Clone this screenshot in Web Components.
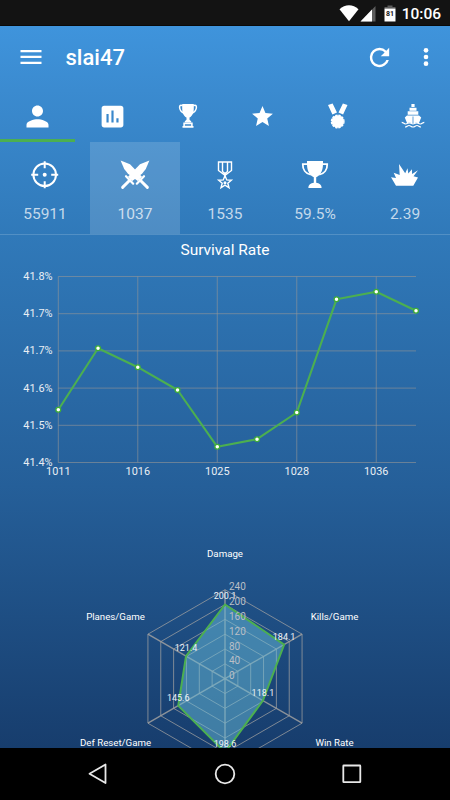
<!DOCTYPE html>
<html lang="en">
<head>
<meta charset="utf-8">
<title>slai47</title>
<style>
  html, body { height: 100%; }
  body {
    margin: 0;
    overflow: hidden;
    font-family: Roboto, sans-serif;
    color: #fff;
    background: #000;
  }
</style>
</head>
<body>
<player-screen>
  <status-bar slot="status" time="10:06" battery="81"></status-bar>
  <app-bar slot="header">slai47</app-bar>

  <tab-bar slot="tabs">
    <tab-item icon="person" active></tab-item>
    <tab-item icon="assessment"></tab-item>
    <tab-item icon="trophy"></tab-item>
    <tab-item icon="star"></tab-item>
    <tab-item icon="medal"></tab-item>
    <tab-item icon="ship"></tab-item>
  </tab-bar>

  <stat-row>
    <stat-tile icon="crosshair">55911</stat-tile>
    <stat-tile icon="swords" selected>1037</stat-tile>
    <stat-tile icon="ribbon">1535</stat-tile>
    <stat-tile icon="cup">59.5%</stat-tile>
    <stat-tile icon="blast">2.39</stat-tile>
  </stat-row>
  <line-chart>Survival Rate</line-chart>
  <radar-chart></radar-chart>

  <nav-bar slot="nav"></nav-bar>
</player-screen>

<script>
const ICONS = {
  menu: { size: [28, 28], box: '0 0 24 24', art: '<path d="M3 18h18v-1.9H3zM3 12.9h18V11H3zM3 6v1.9h18V6z"/>' },
  refresh: { size: [29, 29], box: '0 0 24 24', art: '<path d="M17.65 6.35A7.96 7.96 0 0 0 12 4a8 8 0 1 0 7.73 10h-2.08A6 6 0 1 1 12 6c1.66 0 3.14.69 4.22 1.78L13 11h7V4z"/>' },
  more: { size: [28, 28], box: '0 0 24 24', art: '<circle cx="12" cy="6.3" r="2"/><circle cx="12" cy="12" r="2"/><circle cx="12" cy="17.7" r="2"/>' },
  person: { size: [33, 33], box: '0 0 24 24', art: '<path d="M12 12c2.21 0 4-1.79 4-4s-1.79-4-4-4-4 1.79-4 4 1.79 4 4 4zm0 2c-2.67 0-8 1.34-8 4v2h16v-2c0-2.66-5.33-4-8-4z"/>' },
  // bars are shorter and sit lower to the right
  assessment: { size: [29, 29], box: '0 0 24 24', art: '<path d="M19 3H5c-1.1 0-2 .9-2 2v14c0 1.1.9 2 2 2h14c1.1 0 2-.9 2-2V5c0-1.1-.9-2-2-2zM8.800 17H7v-7h1.800v7zm4.100 0h-1.800V7h1.800v10zm4.100 0h-1.800v-3.500H17V17z"/>' },
  trophy: {
    size: [20, 26], box: '0 0 20 26',
    art: `<path d="M4.200 1h11.600v4c0 4.500-1.300 8.200-4.300 9.500v2.300l1.700 1.500v1.200H6.800v-1.200l1.700-1.500v-2.300C5.500 13.200 4.200 9.500 4.200 5z"/>
      <path d="M4.700 2.700C2.500 1.900 1.500 2.500 1.600 4.300c.1 2.300 1.600 4.700 4.400 5.900M15.300 2.700c2.200-.8 3.200-.2 3.100 1.600-.1 2.300-1.600 4.700-4.400 5.900" fill="none" stroke="#fff" stroke-width="1.500"/>
      <path d="M5.300 19.500h9.400V23h.8v1.800h-11V23h.8zm1.600 1.700v1.500h6.200v-1.500z" fill-rule="evenodd"/>`
  },
  star: { size: [25, 25], box: '0 0 24 24', art: '<path d="M12 17.270 18.180 21l-1.640-7.030L22 9.240l-7.190-.61L12 2 9.190 8.630 2 9.240l5.460 4.730L5.820 21z"/>' },
  medal: {
    size: [22, 28], box: '0 0 22 28',
    art: `<path d="M1 3 5.600 1.500 10 10.600l-4.600 2zM20.500 3l-4.600-1.500-4.400 9.100 4.600 2z"/>
      <circle cx="10.700" cy="19.500" r="6.200"/><circle cx="10.700" cy="19.500" r="6.300" fill="none" stroke="#fff" stroke-width="1.300" stroke-dasharray="2.300 1"/>`
  },
  ship: {
    size: [24, 26], box: '0 0 24 26',
    art: `<path d="M10.400 1h3.200v3h-3.200zM8.500 4.800h7v2.900h-7zM6.700 8.300h10.600v3.500H6.700z"/>
      <path d="M3.800 14.400 6 12.600h12l2.200 1.800-2.300 5.800c-1 0-1.700-.8-2.600-.8s-1.800 1-2.900 1V13.500h-.8v6.900c-1.100 0-2-.9-2.900-.9s-1.600.7-2.600.7z"/>
      <path d="M.7 19.300c1.500 0 2 1.700 3.800 1.700s2.500-1.200 3.800-1.200 2 1.200 3.700 1.200 2.500-1.200 3.700-1.200S17.700 21 19.500 21s2.300-1.700 3.800-1.700M4 24c1.700 0 2.500-1.500 4-1.500S10.300 24 12 24s2.500-1.500 4-1.500S18.300 24 20 24" fill="none" stroke="#fff" stroke-width="1.200"/>`
  },
  crosshair: {
    size: [30, 30], box: '0 0 30 30',
    art: `<g fill="none" stroke="#fff" stroke-width="2"><circle cx="14.700" cy="14.700" r="11.300"/>
      <path d="M14.700 1.200v7M14.700 21.200v7M1.200 14.700h7M21.200 14.700h7"/></g><circle cx="14.700" cy="14.700" r="2"/>`
  },
  swords: {
    size: [30, 30], box: '0 0 30 30',
    art: `<path d="M.6.600 10 4.300l12 12.400-4.300 4.300L8 13.700 4.200 9z"/>
      <path d="M29.400.6 20 4.300 8 16.700l4.300 4.300L22 13.700 25.800 9z"/>
      <g fill="none" stroke="#fff" stroke-linecap="round">
        <path stroke-width="2.200" d="m16.800 23.700 7.200-7.500M13.200 23.700 6 16.200"/>
        <path stroke-width="2.900" d="m20 20 7.400 7.400M10 20l-7.400 7.400"/>
      </g>`
  },
  ribbon: {
    size: [18, 30], box: '0 0 18 30',
    art: `<g fill="none" stroke="#fff" stroke-width="1.400"><path d="M2.500 2h13v8.500L9 15.300 2.500 10.500zM6.500 2v9.500L9 13.500l2.500-2V2"/>
      <path d="m9 15.500 1.700 4.400 4.700.3-3.600 3 1.200 4.600-4-2.600-4 2.600 1.200-4.600-3.600-3 4.700-.3z"/><circle cx="9" cy="22.700" r=".8"/></g>`
  },
  cup: {
    size: [28, 30], box: '0 0 28 30',
    art: `<path d="M6 1h16v2.500c0 6-1.500 10.500-5.500 12.900l-1.300.8v5.600c3 .4 5.400 2 5.400 5.200H7.400c0-3.200 2.400-4.800 5.400-5.200v-5.600l-1.300-.8C7.500 14 6 9.500 6 3.500z"/>
      <path d="M6.500 4.200H1.800c-.2 5 2.700 9.300 8 10.500M21.500 4.200h4.700c.2 5-2.700 9.300-8 10.500" fill="none" stroke="#fff" stroke-width="1.800"/>`
  },
  blast: {
    size: [28, 30], box: '0 0 28 30',
    art: '<path d="M5 25.700 0 17.300l5 .7-2.300-5.200 6 2.200L8 4l6.200 9.300 2.300-5 .8 5.300 3.600-4.300.2 4.700 5.900-3.700-4.500 6 4.500 1.200-4.700 8.200z"/>'
  }
};

function attachTemplate(el, html) {
  const tpl = document.createElement('template');
  tpl.innerHTML = html;
  el.attachShadow({ mode: 'open' }).appendChild(tpl.content.cloneNode(true));
}

class AppIcon extends HTMLElement {
  connectedCallback() {
    if (this.shadowRoot) return;
    const { size, box, art } = ICONS[this.getAttribute('name')];
    attachTemplate(this, `
      <style>
        :host { display: inline-flex; flex: none; }
        svg { display: block; fill: #fff; }
      </style>
      <svg width="${size[0]}" height="${size[1]}" viewBox="${box}">${art}</svg>
    `);
  }
}

class PlayerScreen extends HTMLElement {
  constructor() {
    super();
    attachTemplate(this, `
      <style>
        :host {
          display: flex;
          flex-direction: column;
          height: 100vh;
        }
        .page {
          flex: 1;
          min-height: 0;
          overflow: hidden;
          background: linear-gradient(#3f94dc 0, #3b8bd0 64px, #3079b9 210px, #255f99 460px, #173d6d 722px);
        }
      </style>
      <slot name="status"></slot>
      <div class="page">
        <slot name="header"></slot>
        <slot name="tabs"></slot>
        <slot></slot>
      </div>
      <slot name="nav"></slot>
    `);
  }
}

class StatusBar extends HTMLElement {
  connectedCallback() {
    if (this.shadowRoot) return;
    attachTemplate(this, `
      <style>
        :host {
          display: flex;
          align-items: center;
          justify-content: flex-end;
          height: 26px;
          box-sizing: border-box;
          padding-right: 9px;
          background: #131313;
          border-bottom: 1px solid #0a0a0a;
          font-size: 15.500px;
          font-weight: 500;
        }
        svg { display: block; margin-right: 6px; }
        span { line-height: 26px; padding-top: 2px; }
      </style>
      <svg width="57" height="18" viewBox="0 0 57 18" fill="#fff">
        <path d="M.5 5.200C6-.1 14-.1 19.500 5.200L10 17.200z"/>
        <path d="M36.500 2v15.500H21.500z" fill="#5c5c5c"/>
        <path d="M33 5.600v11.900H21.500z"/>
        <path d="M45.500 4.500V3h3V1.500h5V3h3v1.500z" fill="#5c5c5c"/>
        <path d="M45.500 4.500h11v13h-11z"/>
        <text x="51" y="12.300" font-size="7" font-weight="700" text-anchor="middle" fill="#131313">${this.getAttribute('battery')}</text>
      </svg>
      <span>${this.getAttribute('time')}</span>
    `);
  }
}

class AppBar extends HTMLElement {
  constructor() {
    super();
    attachTemplate(this, `
      <style>
        :host {
          display: flex;
          align-items: center;
          height: 62px;
          padding: 0 10px 2px 16.5px;
        }
        .title {
          flex: 1;
          margin-left: 21px;
          font-size: 22px;
          font-weight: 500;
        }
        .more { margin-left: 18px; }
      </style>
      <app-icon name="menu"></app-icon>
      <div class="title"><slot></slot></div>
      <app-icon name="refresh"></app-icon>
      <app-icon class="more" name="more"></app-icon>
    `);
  }
}

class TabBar extends HTMLElement {
  constructor() {
    super();
    attachTemplate(this, `
      <style>
        :host {
          display: grid;
          grid-template-columns: repeat(6, 1fr);
          height: 52px;
        }
      </style>
      <slot></slot>
    `);
  }
}

class TabItem extends HTMLElement {
  connectedCallback() {
    if (this.shadowRoot) return;
    attachTemplate(this, `
      <style>
        :host {
          display: flex;
          align-items: center;
          justify-content: center;
          border-bottom: 3px solid transparent;
          padding-top: 3px;
          box-sizing: border-box;
          height: 52px;
        }
        :host([active]) { border-color: #4caf50; }
      </style>
      <app-icon name="${this.getAttribute('icon')}"></app-icon>
    `);
  }
}

class StatRow extends HTMLElement {
  constructor() {
    super();
    attachTemplate(this, `
      <style>
        :host {
          display: grid;
          grid-template-columns: repeat(5, 1fr);
          border-bottom: 1px solid rgba(255, 255, 255, .17);
        }
      </style>
      <slot></slot>
    `);
  }
}

class StatTile extends HTMLElement {
  connectedCallback() {
    if (this.shadowRoot) return;
    attachTemplate(this, `
      <style>
        :host {
          display: flex;
          flex-direction: column;
          align-items: center;
          box-sizing: border-box;
          height: 92px;
          padding-top: 18px;
        }
        :host([selected]) { background: rgba(255, 255, 255, .15); }
        .value {
          margin-top: 14px;
          font-size: 15.500px;
          line-height: 20px;
          color: rgba(255, 255, 255, .72);
        }
      </style>
      <app-icon name="${this.getAttribute('icon')}"></app-icon>
      <div class="value"><slot></slot></div>
    `);
  }
}

class LineChart extends HTMLElement {
  constructor() {
    super();
    const left = 58.3, right = 416, top = 9.500, rowGap = 37.200;
    const step = (right - left) / 9;
    const yLabels = ['41.8%', '41.7%', '41.7%', '41.6%', '41.5%', '41.4%'];
    const xLabels = ['1011', '1016', '1025', '1028', '1036'];
    const values = [142.7, 81.2, 100.2, 123, 179.800, 172.2, 145.5, 32.3, 24.8, 43.8];
    const points = values.map((y, i) => [left + i * step, y]);

    const rows = yLabels.map((t, i) => {
      const y = top + i * rowGap;
      return `<path class="grid" d="M${left} ${y}H${right}"/><text x="52.500" y="${y + 3.500}" text-anchor="end">${t}</text>`;
    }).join('');
    const cols = xLabels.map((t, i) => {
      const x = left + i * 2 * step;
      return `<path class="grid" d="M${x} ${top}V${top + 5 * rowGap}"/><text x="${x}" y="208" text-anchor="middle">${t}</text>`;
    }).join('');
    const dots = points.map(([x, y]) => `<circle cx="${x}" cy="${y}" r="2.400"/>`).join('');

    attachTemplate(this, `
      <style>
        :host { display: block; }
        .title {
          height: 32px;
          line-height: 31px;
          font-size: 15.500px;
          text-align: center;
        }
        svg { display: block; }
        text { fill: #e9eef4; font-size: 10.900px; }
        .grid { stroke: rgba(150, 150, 150, .6); stroke-width: 1; }
        .line { fill: none; stroke: #4caf50; stroke-width: 2.100; stroke-linejoin: round; }
        circle { fill: #fff; stroke: #3fae35; stroke-width: 1.300; }
      </style>
      <div class="title"><slot></slot></div>
      <svg width="450" height="253" viewBox="0 0 450 253">
        ${rows}${cols}
        <polyline class="line" points="${points.join(' ')}"/>
        ${dots}
      </svg>
    `);
  }
}

class RadarChart extends HTMLElement {
  constructor() {
    super();
    const cx = 225, cy = 158.700, unit = 89 / 240;
    // axes run clockwise from the top
    const at = (axis, value) => {
      const a = axis * Math.PI / 3;
      return [cx + Math.sin(a) * value * unit, cy - Math.cos(a) * value * unit];
    };
    const ring = v => [0, 1, 2, 3, 4, 5].map(i => at(i, v)).join(' ');
    const values = [200.1, 184.1, 118.1, 198.6, 145.6, 121.4];

    const rings = [40, 80, 120, 160, 200, 240].map(v => `<polygon class="web" points="${ring(v)}"/>`).join('');
    const spokes = values.map((v, i) => `<path class="spoke" d="M${cx} ${cy}L${at(i, 240)}"/>`).join('');
    const scale = [0, 40, 80, 120, 160, 200, 240].map(v =>
      `<text class="scale" x="229" y="${cy - v * unit + .500}">${v}</text>`).join('');
    const valueLabels = values.map((v, i) => {
      const [x, y] = at(i, v);
      return `<text class="value" x="${x}" y="${y - 5}">${v}</text>`;
    }).join('');
    const names = [
      ['Damage', 225, 37], ['Kills/Game', 334.5, 99.500], ['Win Rate', 334.5, 225.500],
      ['Def Reset/Game', 115.5, 226], ['Planes/Game', 115.5, 99.500]
    ].map(([t, x, y]) => `<text class="name" x="${x}" y="${y}">${t}</text>`).join('');

    attachTemplate(this, `
      <style>
        :host { display: block; }
        svg { display: block; }
        .web { fill: none; stroke: rgba(160, 160, 160, .75); stroke-width: 1; }
        .spoke { stroke: rgba(160, 160, 160, .85); stroke-width: 1.400; }
        .area { fill: rgba(104, 188, 218, .5); stroke: #4caf50; stroke-width: 2; }
        .name { fill: #fff; font-size: 9.700px; text-anchor: middle; }
        .value { fill: #eef2f6; font-size: 9px; text-anchor: middle; }
        .scale { fill: #b9bfc6; font-size: 10px; }
      </style>
      <svg width="450" height="228" viewBox="0 0 450 228">
        ${spokes}${rings}
        <polygon class="area" points="${values.map((v, i) => at(i, v)).join(' ')}"/>
        ${names}${valueLabels}${scale}
      </svg>
    `);
  }
}

class NavBar extends HTMLElement {
  constructor() {
    super();
    attachTemplate(this, `
      <style>
        :host {
          display: flex;
          align-items: center;
          justify-content: center;
          gap: 102.500px;
          height: 52px;
          background: #000;
        }
        svg { display: block; fill: none; stroke: #e8e8e8; stroke-width: 1.800; stroke-linejoin: round; }
      </style>
      <svg width="24" height="24"><path d="M18.500 2.500v18.500L2.500 11.800z"/></svg>
      <svg width="24" height="24"><circle cx="12" cy="12" r="9.300"/></svg>
      <svg width="24" height="24"><rect x="3.300" y="3.500" width="17" height="16.700" rx=".5"/></svg>
    `);
  }
}

customElements.define('app-icon', AppIcon);
customElements.define('player-screen', PlayerScreen);
customElements.define('status-bar', StatusBar);
customElements.define('app-bar', AppBar);
customElements.define('tab-bar', TabBar);
customElements.define('tab-item', TabItem);
customElements.define('stat-row', StatRow);
customElements.define('stat-tile', StatTile);
customElements.define('line-chart', LineChart);
customElements.define('radar-chart', RadarChart);
customElements.define('nav-bar', NavBar);
</script>
</body>
</html>
